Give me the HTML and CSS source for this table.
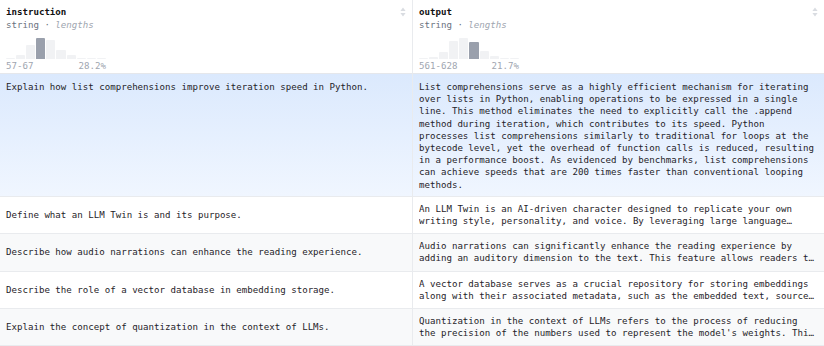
FILE: index.html
```html
<!DOCTYPE html>
<html>
<head>
<meta charset="utf-8">
<link rel="stylesheet" href="styles.css">
</head>
<body>
<div class="table">
  <div class="head cell col1">
    <div class="title-row"><span class="title">instruction</span><svg class="sort" width="6" height="10" viewBox="0 0 6 10"><path d="M3 0.5 L5.6 4 H0.4 Z M3 9.5 L5.6 6 H0.4 Z" fill="#d9dce1"/></svg></div>
    <div class="type">string · <i>lengths</i></div>
    <div class="hist">
      <span class="bar" style="height:1px"></span>
      <span class="bar" style="height:4px"></span>
      <span class="bar" style="height:14px"></span>
      <span class="bar sel" style="height:21px"></span>
      <span class="bar" style="height:19px"></span>
      <span class="bar" style="height:9px"></span>
      <span class="bar" style="height:4px"></span>
      <span class="bar" style="height:1px"></span>
      <span class="bar" style="height:1px"></span>
      <span class="bar" style="height:1px"></span>
    </div>
    <div class="range"><span>57-67</span><span>28.2%</span></div>
  </div>
  <div class="head cell">
    <div class="title-row"><span class="title">output</span><svg class="sort" width="6" height="10" viewBox="0 0 6 10"><path d="M3 0.5 L5.6 4 H0.4 Z M3 9.5 L5.6 6 H0.4 Z" fill="#d9dce1"/></svg></div>
    <div class="type">string · <i>lengths</i></div>
    <div class="hist">
      <span class="bar" style="height:1px"></span>
      <span class="bar" style="height:2px"></span>
      <span class="bar" style="height:7px"></span>
      <span class="bar" style="height:18px"></span>
      <span class="bar" style="height:21px"></span>
      <span class="bar sel" style="height:17px"></span>
      <span class="bar" style="height:8px"></span>
      <span class="bar" style="height:3px"></span>
      <span class="bar" style="height:1px"></span>
      <span class="bar" style="height:1px"></span>
    </div>
    <div class="range"><span>561-628</span><span>21.7%</span></div>
  </div>

  <div class="row active">
    <div class="cell col1 top">Explain how list comprehensions improve iteration speed in Python.</div>
    <div class="cell top">List comprehensions serve as a highly efficient mechanism for iterating over lists in Python, enabling operations to be expressed in a single line. This method eliminates the need to explicitly call the .append method during iteration, which contributes to its speed. Python processes list comprehensions similarly to traditional for loops at the bytecode level, yet the overhead of function calls is reduced, resulting in a performance boost. As evidenced by benchmarks, list comprehensions can achieve speeds that are 200 times faster than conventional looping methods.</div>
  </div>
  <div class="row">
    <div class="cell col1 mid">Define what an LLM Twin is and its purpose.</div>
    <div class="cell"><div class="clamp">An LLM Twin is an AI-driven character designed to replicate your own writing style, personality, and voice. By leveraging large language models, it learns from your digital content.</div></div>
  </div>
  <div class="row alt">
    <div class="cell col1 mid">Describe how audio narrations can enhance the reading experience.</div>
    <div class="cell"><div class="clamp">Audio narrations can significantly enhance the reading experience by adding an auditory dimension to the text. This feature allows readers to listen to articles.</div></div>
  </div>
  <div class="row">
    <div class="cell col1 mid">Describe the role of a vector database in embedding storage.</div>
    <div class="cell"><div class="clamp">A vector database serves as a crucial repository for storing embeddings along with their associated metadata, such as the embedded text, source URL and creation date.</div></div>
  </div>
  <div class="row alt">
    <div class="cell col1 mid">Explain the concept of quantization in the context of LLMs.</div>
    <div class="cell"><div class="clamp">Quantization in the context of LLMs refers to the process of reducing the precision of the numbers used to represent the model's weights. This reduces memory usage.</div></div>
  </div>
</div>
</body>
</html>
```

FILE: styles.css
```css
html, body {
  margin: 0;
  padding: 0;
  background: #ffffff;
}
body {
  font-family: "DejaVu Sans Mono", "Liberation Mono", monospace;
  font-size: 9.12px;
  line-height: 12.2px;
  color: #1f2329;
  width: 824px;
  height: 346px;
  overflow: hidden;
}
.table {
  display: grid;
  grid-template-columns: 413px 411px;
}
.row {
  display: contents;
}
.cell {
  padding: 6px 7px 6px 6px;
  border-bottom: 1px solid #e9ebee;
  min-width: 0;
}
.col1 {
  border-right: 1px solid #e9ebee;
}
.head {
  height: 74px;
  box-sizing: border-box;
  padding: 6px 6px 0 6px;
  border-bottom: 1px solid #e5e7eb;
  background: #fff;
}
.title-row {
  display: flex;
  justify-content: space-between;
  align-items: center;
  height: 12px;
}
.title {
  font-weight: bold;
  color: #111;
}
.type {
  margin-top: 1px;
  color: #6b7280;
}
.type i {
  color: #a0a6b0;
}
.hist {
  margin-top: 7px;
  height: 21px;
  width: 100px;
  display: flex;
  align-items: flex-end;
  gap: 1px;
}
.bar {
  flex: 1;
  background: #f1f2f4;
  border-radius: 1px 1px 0 0;
}
.bar.sel {
  background: #9aa0ac;
}
.range {
  width: 100px;
  display: flex;
  justify-content: space-between;
  color: #a0a6b0;
  margin-top: 1px;
}
.active .cell {
  background: linear-gradient(#dbe9fd, #f0f6ff);
  padding-top: 7px;
  padding-bottom: 5px;
}
.alt .cell {
  background: #f8f9fa;
}
.mid {
  display: flex;
  align-items: center;
}
.clamp {
  display: -webkit-box;
  -webkit-box-orient: vertical;
  -webkit-line-clamp: 2;
  overflow: hidden;
}
```
